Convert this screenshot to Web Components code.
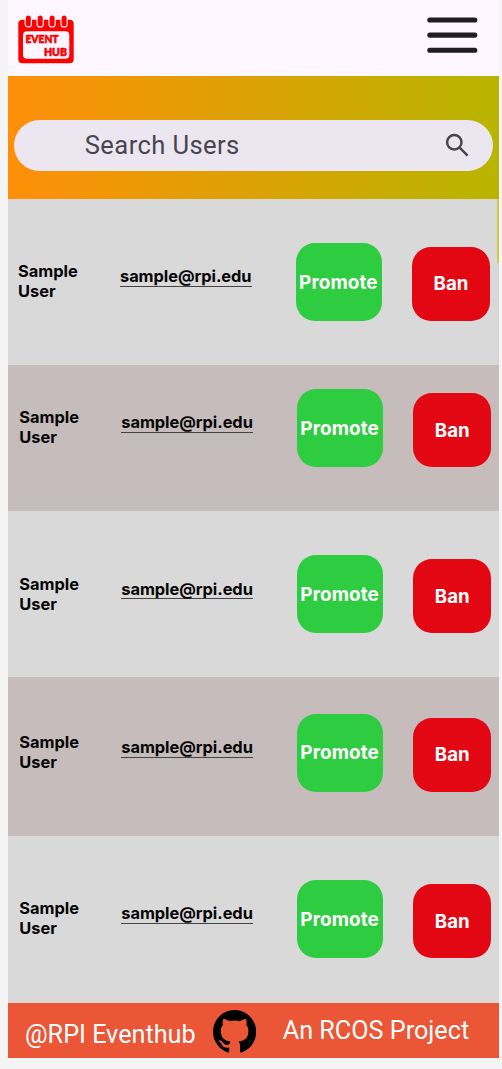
<!DOCTYPE html>
<html lang="en">
<head>
<meta charset="utf-8">
<title>Event Hub</title>
<style>
html,body{margin:0;background:#f4f4f4}
body{height:1069px;overflow:hidden;font-family:Inter,"Liberation Sans",sans-serif}
</style>
</head>
<body>
<admin-page></admin-page>
<script>
function define(name, html) {
  const template = document.createElement('template');
  template.innerHTML = html;
  customElements.define(name, class extends HTMLElement {
    constructor() {
      super();
      this.attachShadow({mode: 'open'}).append(template.content.cloneNode(true));
    }
  });
}

define('event-logo', `<style>:host{display:block;width:56px;height:50px}svg{display:block}</style>
<svg width="56" height="50" viewBox="0 0 56 50">
<rect x=".3" y="4.8" width="55.4" height="43.5" rx="4" fill="red"/>
<rect x="5" y="16.2" width="46.3" height="27.6" rx="4" fill="#fef7ff"/>
<g fill="red" stroke="#fef7ff" stroke-width="1.2">
<rect x="7.2" y="0" width="6.2" height="12" rx="3.1"/><rect x="19.1" y="0" width="6.2" height="12" rx="3.1"/><rect x="31" y="0" width="6.2" height="12" rx="3.1"/><rect x="43" y="0" width="6.2" height="12" rx="3.1"/></g>
<g fill="red" stroke="red" stroke-width=".7" font-family="Lato,sans-serif" font-weight="900" font-size="12">
<text x="7.5" y="27.6" textLength="33" lengthAdjust="spacingAndGlyphs">EVENT</text>
<text x="25.9" y="40.8" textLength="23" lengthAdjust="spacingAndGlyphs">HUB</text></g>
</svg>`);

define('menu-button', `<style>:host{display:block}svg{display:block}</style>
<svg width="51" height="38" viewBox="0 0 51 38" stroke="#1f1f1f" stroke-width="5.1" stroke-linecap="round"><path d="M2.8 3h45M2.8 18.1h45M2.8 33.2h45"/></svg>`);

define('top-bar', `<style>:host{display:flex;justify-content:space-between;box-sizing:border-box;height:75.5px;padding:15px 21px 0 10px;background:#fef7ff}
menu-button{margin-top:2px}</style><event-logo></event-logo><menu-button></menu-button>`);

define('search-bar', `<style>:host{display:flex;align-items:center;justify-content:space-between;box-sizing:border-box;height:51.5px;padding:0 22px 0 70.5px;border-radius:26px;background:#ece6f0;color:#49454f;font:400 25.6px/30px Roboto,sans-serif;letter-spacing:.38px}
svg{display:block;margin-top:-1px}</style><span><slot></slot></span>
<svg width="26" height="26" viewBox="0 0 26 26" fill="none" stroke="#49454f" stroke-width="2.5"><circle cx="9.3" cy="10.2" r="7.2"/><path d="M14.4 15.4l8.2 8.2"/></svg>`);

define('search-hero', `<style>:host{display:block;box-sizing:border-box;height:123.5px;padding:44px 5.8px 0 6.3px;background:linear-gradient(90deg,#ff8f0a,#b8b500)}</style><search-bar><slot></slot></search-bar>`);

define('action-button', `<style>:host{display:flex;align-items:center;justify-content:center;box-sizing:border-box;border-radius:19px;background:var(--fill);color:#fff;font:700 18.7px/22px Inter,sans-serif;white-space:nowrap}</style><slot></slot>`);

define('user-row', `<style>:host{display:grid;grid-template-columns:102px 176px 85.7px 78px;column-gap:0;align-items:start;box-sizing:border-box;height:var(--h);padding:var(--top) 0 0 var(--left,11.3px);background:var(--bg,#d9d9d9);color:#050505;font:700 16.4px/20px Inter,sans-serif}
.name{width:70px;margin-top:18.2px}
.mail{justify-self:start;margin-top:23.2px;height:19.8px;line-height:20px;border-bottom:1.3px solid #444;letter-spacing:-.05px}
action-button{height:78px}
.ban{height:74px;margin:4px 0 0 30.3px;width:78px;padding-top:.8px}
.promote{--fill:#2ecc40;font-size:18.9px;letter-spacing:.1px;padding:1px 1px 0 0}.ban{--fill:#e30613}</style>
<span class="name"><slot name="name"></slot></span><span class="mail"><slot name="mail"></slot></span>
<action-button class="promote">Promote</action-button><action-button class="ban">Ban</action-button>`);

define('git-mark', `<style>:host{display:block}svg{display:block}</style>
<svg width="43.4" height="42.6" viewBox="0 0 98 96"><path d="M48.854 0C21.839 0 0 22 0 49.217c0 21.756 13.993 40.172 33.405 46.69 2.427.49 3.316-1.059 3.316-2.362 0-1.141-.08-5.052-.08-9.127-13.59 2.934-16.42-5.867-16.42-5.867-2.184-5.704-5.42-7.17-5.42-7.17-4.448-3.015.324-3.015.324-3.015 4.934.326 7.523 5.052 7.523 5.052 4.367 7.496 11.404 5.378 14.235 4.074.404-3.178 1.699-5.378 3.074-6.6-10.839-1.141-22.243-5.378-22.243-24.283 0-5.378 1.94-9.778 5.014-13.2-.485-1.222-2.184-6.275.486-13.038 0 0 4.125-1.304 13.426 5.052a46.97 46.97 0 0 1 12.214-1.63c4.125 0 8.33.571 12.213 1.63 9.302-6.356 13.427-5.052 13.427-5.052 2.67 6.763.97 11.816.485 13.038 3.155 3.422 5.015 7.822 5.015 13.2 0 18.905-11.404 23.06-22.324 24.283 1.78 1.548 3.316 4.481 3.316 9.126 0 6.6-.08 11.897-.08 13.526 0 1.304.89 2.853 3.316 2.364 19.412-6.52 33.405-24.935 33.405-46.691C97.707 22 75.788 0 48.854 0z"/></svg>`);

define('page-footer', `<style>:host{display:flex;align-items:flex-start;box-sizing:border-box;height:55px;padding-left:17px;background:#ea5636;color:#fff;font:400 25.2px/30px Roboto,sans-serif;white-space:nowrap}
.org{width:187.7px;margin-top:17.5px}git-mark{margin-top:7.4px}.project{margin:13.6px 0 0 26.7px}</style>
<span class="org">@RPI Eventhub</span><git-mark></git-mark><span class="project">An RCOS Project</span>`);

const rows = [['166px','44px'],['146.2px','24.2px'],['166.3px','44.3px'],['158.5px','36.5px'],['166.6px','44.2px']]
  .map(([h, top], i) => `<user-row style="--h:${h};--top:${top};${i === 0 ? '--left:10px;' : ''}${i % 2 ? '--bg:#c6bcbc' : ''}"><span slot="name">Sample User</span><span slot="mail">sample@rpi.edu</span></user-row>`).join('');

define('admin-page', `<style>:host{display:block;width:490.5px;margin-left:8px}
main{background:linear-gradient(#d2cc42 64px,#d9d2d4 64px)}
user-row:first-child{margin-right:1.3px}</style>
<top-bar></top-bar><search-hero>Search Users</search-hero><main>${rows}</main><page-footer></page-footer>`);
</script>
</body>
</html>
